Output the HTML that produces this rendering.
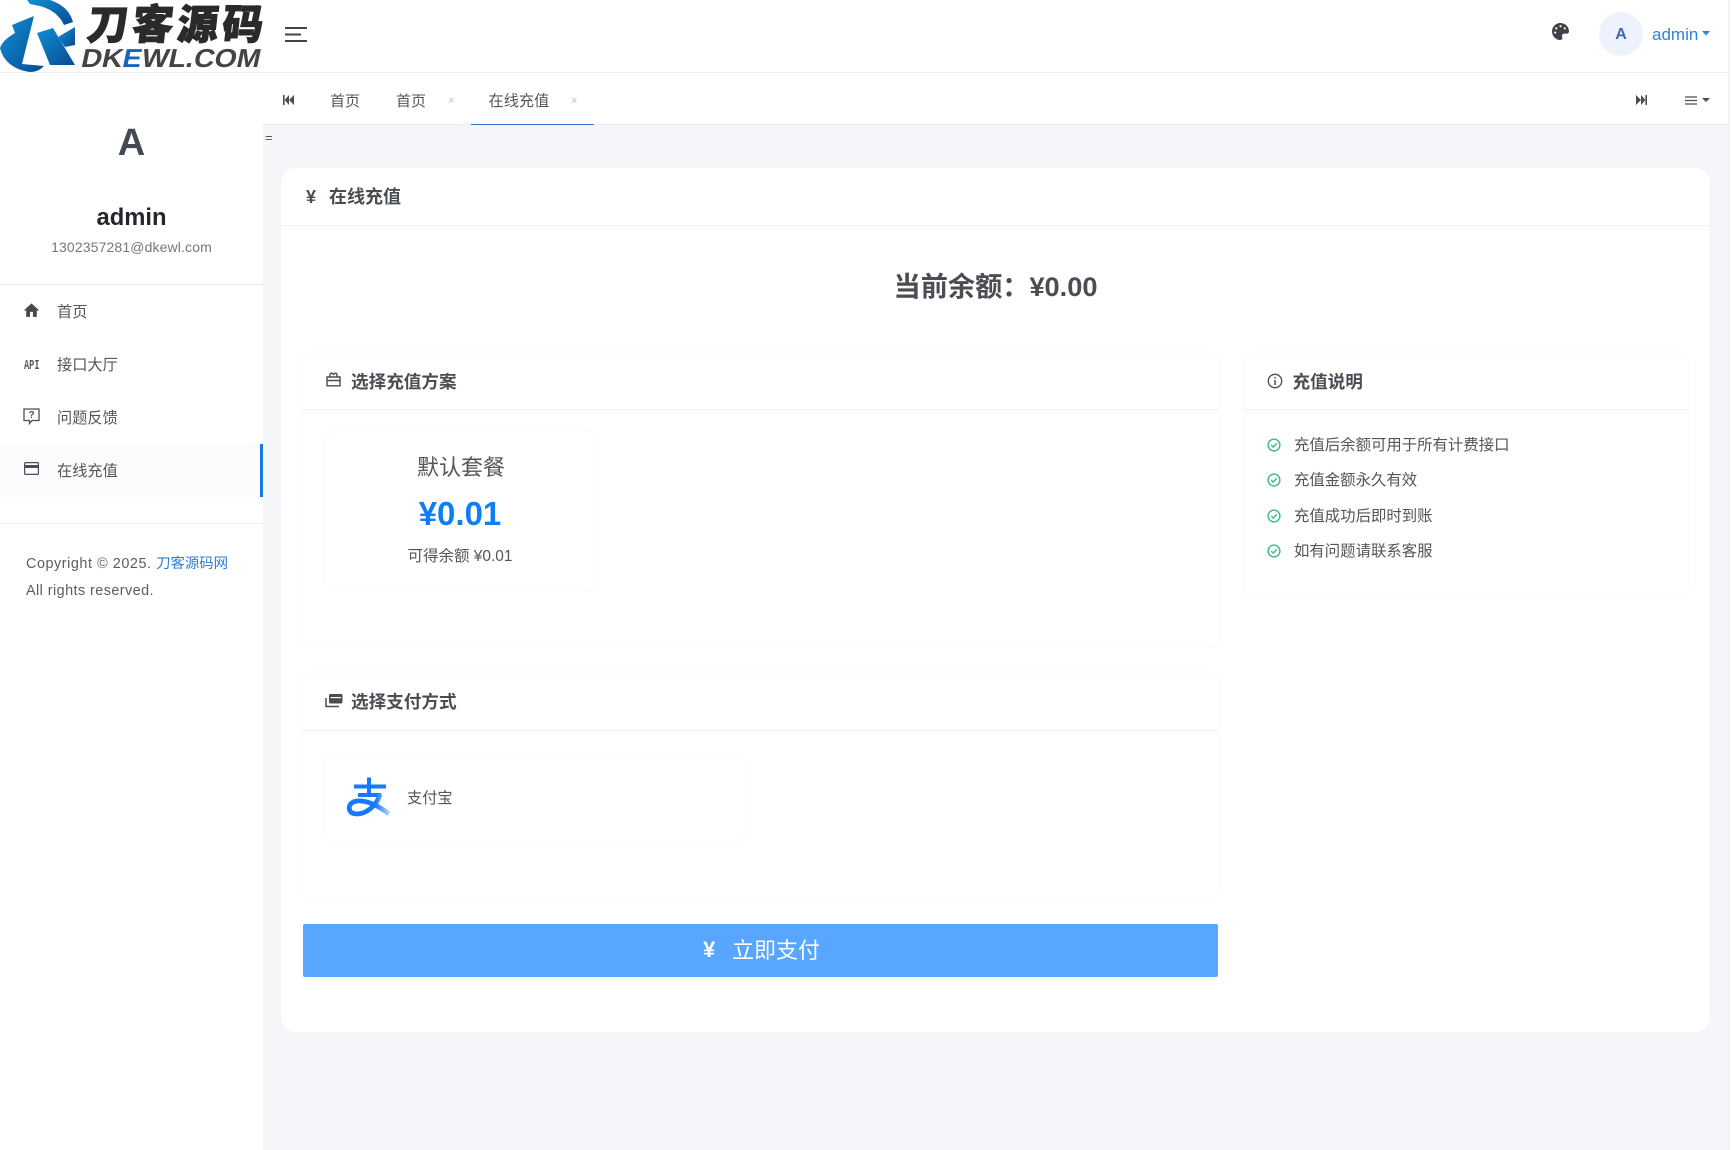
<!DOCTYPE html>
<html lang="zh"><head><meta charset="utf-8"><title>在线充值</title>
<style>
html,body{margin:0;padding:0;width:1731px;height:1150px;overflow:hidden;background:#f5f6fa;font-family:"Liberation Sans","Noto Sans CJK SC",sans-serif;color:#555}
.a{position:absolute}
.t{position:absolute;white-space:nowrap;line-height:20px;height:20px}
.card{position:absolute;background:#fff;box-sizing:border-box;border-radius:8px;box-shadow:0 0 5px rgba(0,0,0,.035)}
.line{position:absolute;height:1px;background:#eef0f2}
.h{font-weight:700;font-size:17.6px;color:#4a4d52}
svg{position:absolute;display:block}
a{color:#2a7fd8;text-decoration:none}
</style></head><body>

<!-- top header -->
<div class="a" style="left:0;top:0;width:1728px;height:73px;background:#fff;border-bottom:1px solid #f0f1f3;box-sizing:border-box"></div>
<div class="a" style="left:1728px;top:0;width:3px;height:1150px;background:#f9f9fb;border-left:1px solid #f0f0f2;box-sizing:border-box"></div>

<!-- logo -->
<svg style="left:0;top:0" width="264" height="73" viewBox="0 0 264 73">
<defs><linearGradient id="kb" x1="0" y1="0" x2="1" y2="1"><stop offset="0" stop-color="#0f8fd6"/><stop offset="1" stop-color="#0a4a90"/></linearGradient></defs>
<path fill="url(#kb)" d="M27 0H50C62 4 70 11 73 22L64 25C59 14 50 9 40 6L30 4Z"/>
<path fill="url(#kb)" d="M12 25L34 16L22 64L44 66C40 70 36 72 30 72C14 70 3 61 0 48C2 42 8 37 15 33Z"/>
<path fill="url(#kb)" d="M37 33L53 28L75 65L50 65Z"/>
<path fill="url(#kb)" d="M58 37L75 27V45L65 47Z"/>
<g transform="translate(86,39) skewX(-6)">
<text x="0" y="0" font-family="'Noto Sans CJK SC',sans-serif" font-size="41" font-weight="900" fill="#2a2a2a" stroke="#2a2a2a" stroke-width="1" textLength="176" lengthAdjust="spacing">刀客源码</text>
</g>
<g transform="translate(78,67) skewX(-12)">
<text x="2" y="0" font-family="'Liberation Sans',sans-serif" font-size="26" font-weight="700" fill="#444" textLength="179" lengthAdjust="spacingAndGlyphs">DK<tspan fill="#1466b8">E</tspan>WL.COM</text>
</g>
</svg>

<!-- hamburger -->
<svg style="left:285px;top:26px" width="22" height="17" viewBox="0 0 22 17"><path d="M0 2H22M0 8.500H16M0 15H22" stroke="#444" stroke-width="2" fill="none"/></svg>

<!-- palette -->
<svg style="left:1552px;top:23px" width="17" height="17" viewBox="0 0 512 512"><path fill="#3f4246" d="M204.3 5C104.9 24.4 24.8 104.3 5.2 203.4c-37 187 131.7 326.4 258.8 306.7 41.2-6.4 61.4-54.6 42.5-91.7-23.1-45.4 9.9-98.4 60.9-98.4h79.7c35.8 0 64.8-29.6 64.9-65.3C511.5 97.1 368.1-26.9 204.3 5zM96 320c-17.7 0-32-14.3-32-32s14.3-32 32-32 32 14.3 32 32-14.3 32-32 32zm32-128c-17.7 0-32-14.3-32-32s14.3-32 32-32 32 14.3 32 32-14.3 32-32 32zm128-64c-17.7 0-32-14.3-32-32s14.3-32 32-32 32 14.3 32 32-14.3 32-32 32zm128 64c-17.7 0-32-14.3-32-32s14.3-32 32-32 32 14.3 32 32-14.3 32-32 32z"/></svg>

<!-- avatar -->
<div class="a" style="left:1599px;top:12px;width:44px;height:44px;border-radius:50%;background:#eef2fc"></div>
<div class="t" style="left:1599px;top:24.500px;width:44px;text-align:center;font-weight:700;font-size:16px;color:#4466b6">A</div>
<div class="t" style="left:1652px;top:25px;font-size:17px;color:#2f82dc">admin</div>
<svg style="left:1702px;top:31px" width="8" height="5" viewBox="0 0 8 5"><path d="M0 0H8L4 4.500Z" fill="#2f82dc"/></svg>

<!-- tab bar -->
<div class="a" style="left:263px;top:73px;width:1465px;height:52px;background:#fff;border-bottom:1px solid #eceef1;box-sizing:border-box"></div>
<svg style="left:283px;top:95px" width="11" height="10" viewBox="0 0 11 10"><path d="M0 0H1.600V10H0ZM6 0V10L1.600 5ZM11 0V10L6 5Z" fill="#4a4d52"/></svg>
<div class="t" style="left:330px;top:92px;font-size:15px;color:#555">首页</div>
<div class="t" style="left:396px;top:92px;font-size:15px;color:#555">首页</div>
<div class="t" style="left:448px;top:91px;font-size:11px;color:#bbb">×</div>
<div class="t" style="left:488.500px;top:92px;font-size:15.200px;color:#555">在线充值</div>
<div class="t" style="left:571px;top:91px;font-size:11px;color:#bbb">×</div>
<div class="a" style="left:471px;top:124px;width:123px;height:1px;background:#2f74c4"></div>
<svg style="left:1636px;top:95px" width="11" height="10" viewBox="0 0 11 10"><path d="M0 0L5 5L0 10ZM5 0L9.400 5L5 10ZM9.400 0H11V10H9.400Z" fill="#4a4d52"/></svg>
<svg style="left:1685px;top:96px" width="12" height="9" viewBox="0 0 12 9"><path d="M0 1H12M0 4.500H12M0 8H12" stroke="#4a4d52" stroke-width="1.200" fill="none"/></svg>
<svg style="left:1702px;top:98px" width="8" height="4" viewBox="0 0 8 4"><path d="M0 0H8L4 4Z" fill="#4a4d52"/></svg>
<div class="t" style="left:265px;top:128px;font-size:13px;color:#555">=</div>

<!-- sidebar -->
<div class="a" style="left:0;top:73px;width:263px;height:1077px;background:#fff"></div>
<div class="t" style="left:0;top:133px;width:263px;text-align:center;font-size:38px;font-weight:700;color:#444a54">A</div>
<div class="t" style="left:0;top:208px;width:263px;text-align:center;font-size:23.800px;font-weight:700;color:#23262b">admin</div>
<div class="t" style="left:0;top:237px;width:263px;text-align:center;font-size:14px;color:#777;letter-spacing:.13px">1302357281@dkewl.com</div>
<div class="line" style="left:0;top:284px;width:263px;background:#e6e7ea"></div>

<svg style="left:23px;top:302px" width="17" height="17" viewBox="0 0 24 24"><path d="M10 21v-7h4v7h5.500v-9H23L12 2 1 12h3.500v9z" fill="#444a50"/></svg>
<div class="t" style="left:57px;top:303px;font-size:15.200px">首页</div>
<svg style="left:24px;top:358px" width="16" height="13" viewBox="0 0 16 13"><text x="0" y="11" font-family="'Liberation Mono',monospace" font-size="13.500" font-weight="700" fill="#555a60" textLength="15.500" lengthAdjust="spacingAndGlyphs">API</text></svg>
<div class="t" style="left:57px;top:356px;font-size:15.200px">接口大厅</div>
<svg style="left:23px;top:408px" width="17" height="17" viewBox="0 0 17 17"><path d="M1 1H16V12.500H9L6.500 15.500V12.500H1Z" fill="none" stroke="#4a4d52" stroke-width="1.300"/></svg>
<div class="t" style="left:23px;top:406px;width:17px;text-align:center;font-size:10px;font-weight:700;color:#4a4d52">?</div>
<div class="t" style="left:57px;top:408.500px;font-size:15.200px">问题反馈</div>
<div class="a" style="left:0;top:444px;width:260px;height:53px;background:#fcfcfe"></div>
<div class="a" style="left:260px;top:444px;width:3px;height:53px;background:#1a7be8"></div>
<svg style="left:24px;top:462px" width="15" height="13" viewBox="0 0 15 13"><rect x=".6" y=".6" width="13.800" height="11.800" rx="1" fill="none" stroke="#4a4d52" stroke-width="1.200"/><rect x="1" y="3" width="13" height="3" fill="#4a4d52"/></svg>
<div class="t" style="left:57px;top:461.500px;font-size:15.200px">在线充值</div>
<div class="line" style="left:0;top:523px;width:263px"></div>
<div class="t" style="left:26px;top:554px;font-size:14.400px;color:#5a5d62;letter-spacing:.55px">Copyright © 2025. <a href="#" style="letter-spacing:0">刀客源码网</a></div>
<div class="t" style="left:26px;top:581px;font-size:14.400px;color:#5a5d62;letter-spacing:.44px">All rights reserved.</div>

<!-- main card -->
<div class="card" style="left:281px;top:168px;width:1429px;height:864px;border-radius:14px;box-shadow:0 0 6px rgba(0,0,0,.025)"></div>
<div class="line" style="left:281px;top:225px;width:1429px"></div>
<div class="t" style="left:306px;top:187px;font-size:18px;font-weight:700;color:#4a4d52">¥</div>
<div class="t" style="left:329px;top:187px;font-size:18px;font-weight:700;color:#4a4d52">在线充值</div>
<div class="t" style="left:281px;top:276.500px;width:1429px;height:20px;text-align:center;font-size:27.200px;font-weight:700;color:#4a4d52">当前余额：¥0.00</div>

<!-- plan card -->
<div class="card" style="left:303px;top:353px;width:915px;height:293px"></div>
<div class="line" style="left:303px;top:409px;width:915px"></div>
<svg style="left:326px;top:372px" width="15" height="15" viewBox="0 0 15 15"><path d="M1 5H14V13.800H1ZM1 8.500H14M4 5V3C4 .6 7 .6 7.500 3C8 .6 11 .6 11 3V5" fill="none" stroke="#4a4d52" stroke-width="1.400"/></svg>
<div class="t h" style="left:351px;top:372px">选择充值方案</div>

<div class="card" style="left:326px;top:431px;width:271px;height:159px;border-radius:12px"></div>
<div class="t" style="left:325px;top:458px;width:272px;text-align:center;font-size:22px;color:#555">默认套餐</div>
<div class="t" style="left:324px;top:504px;width:272px;text-align:center;font-size:33px;font-weight:700;color:#0d7ff5">¥0.01</div>
<div class="t" style="left:324px;top:546.500px;width:272px;text-align:center;font-size:15.500px;color:#555">可得余额 ¥0.01</div>

<!-- payment card -->
<div class="card" style="left:303px;top:673px;width:915px;height:225px"></div>
<div class="line" style="left:303px;top:730px;width:915px"></div>
<svg style="left:325px;top:693px" width="18" height="15" viewBox="0 0 18 15"><path d="M1 5V13.500H14" fill="none" stroke="#4a4d52" stroke-width="1.500"/><rect x="4" y="1" width="13.500" height="9.500" rx="1.500" fill="#4a4d52"/><rect x="5.500" y="4" width="10.500" height="1.200" fill="#fff"/></svg>
<div class="t h" style="left:351px;top:692px">选择支付方式</div>
<div class="card" style="left:326px;top:754px;width:419px;height:87px;border-radius:10px"></div>
<svg style="left:345px;top:775px" width="50" height="45" viewBox="345 775 50 45">
<defs><linearGradient id="ali" x1="0" y1="0" x2="1" y2="0"><stop offset="0" stop-color="#1677ff"/><stop offset=".65" stop-color="#1677ff"/><stop offset="1" stop-color="#b3d3fb"/></linearGradient></defs>
<path d="M354 786.500H386M369 777.500V795M358 795H381" stroke="#1677ff" stroke-width="4" fill="none"/>
<path d="M380 794C377 806 365 815 355 813.800C347 813 347 802 357 801C367 800 379 806 389 814" stroke="url(#ali)" stroke-width="4.800" fill="none"/>
</svg>
<div class="t" style="left:407px;top:788.500px;font-size:15.200px;color:#555">支付宝</div>

<!-- pay button -->
<div class="a" style="left:303px;top:924px;width:915px;height:53px;background:#58a6ff;border-radius:2px"></div>
<div class="t" style="left:703px;top:940px;font-size:22px;font-weight:700;color:#fff">¥</div>
<div class="t" style="left:732px;top:941px;font-size:22px;color:#fff">立即支付</div>

<!-- instructions -->
<div class="card" style="left:1245px;top:353px;width:443px;height:242px"></div>
<div class="line" style="left:1245px;top:409px;width:443px"></div>
<svg style="left:1267px;top:373px" width="16" height="16" viewBox="0 0 16 16"><circle cx="8" cy="8" r="6.700" fill="none" stroke="#4a4d52" stroke-width="1.300"/><path d="M8 7V12M8 4V5.500" stroke="#4a4d52" stroke-width="1.500"/></svg>
<div class="t h" style="left:1292.500px;top:372px">充值说明</div>

<svg style="left:1267px;top:438px" width="14" height="14" viewBox="0 0 14 14"><circle cx="7" cy="7" r="5.900" fill="none" stroke="#3fb98c" stroke-width="1.400"/><path d="M4.200 7L6.300 9.100L9.900 5.200" fill="none" stroke="#3fb98c" stroke-width="1.400"/></svg>
<div class="t" style="left:1294px;top:436px;font-size:15.400px">充值后余额可用于所有计费接口</div>
<svg style="left:1267px;top:473px" width="14" height="14" viewBox="0 0 14 14"><circle cx="7" cy="7" r="5.900" fill="none" stroke="#3fb98c" stroke-width="1.400"/><path d="M4.200 7L6.300 9.100L9.900 5.200" fill="none" stroke="#3fb98c" stroke-width="1.400"/></svg>
<div class="t" style="left:1294px;top:471px;font-size:15.400px">充值金额永久有效</div>
<svg style="left:1267px;top:509px" width="14" height="14" viewBox="0 0 14 14"><circle cx="7" cy="7" r="5.900" fill="none" stroke="#3fb98c" stroke-width="1.400"/><path d="M4.200 7L6.300 9.100L9.900 5.200" fill="none" stroke="#3fb98c" stroke-width="1.400"/></svg>
<div class="t" style="left:1294px;top:507px;font-size:15.400px">充值成功后即时到账</div>
<svg style="left:1267px;top:544px" width="14" height="14" viewBox="0 0 14 14"><circle cx="7" cy="7" r="5.900" fill="none" stroke="#3fb98c" stroke-width="1.400"/><path d="M4.200 7L6.300 9.100L9.900 5.200" fill="none" stroke="#3fb98c" stroke-width="1.400"/></svg>
<div class="t" style="left:1294px;top:542px;font-size:15.400px">如有问题请联系客服</div>

</body></html>
